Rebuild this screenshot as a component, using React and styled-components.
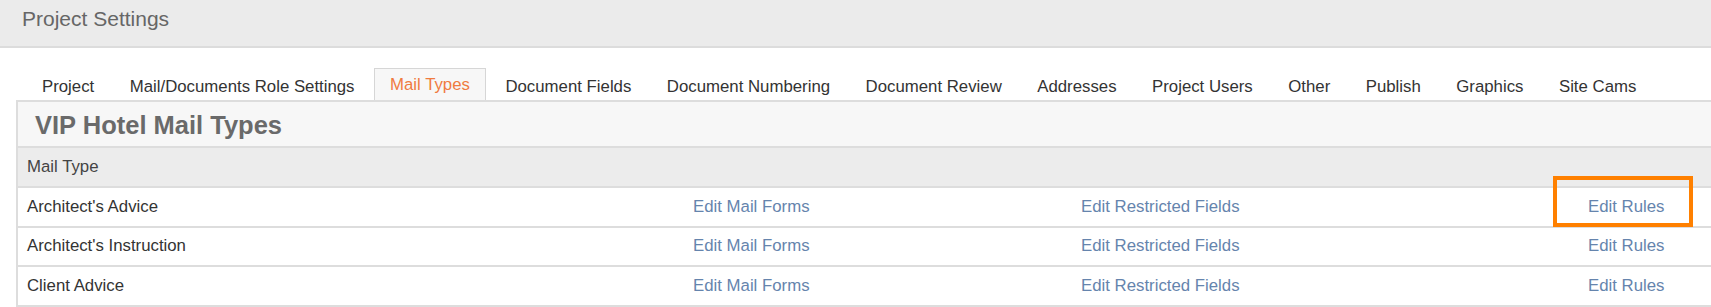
import styled, { createGlobalStyle } from "styled-components";

const GlobalStyle = createGlobalStyle`
  body {
    margin: 0;
    background: #fff;
    font-family: "Liberation Sans", Arial, sans-serif;
    color: #333;
  }
`;

const PageHeader = styled.div`
  height: 46px;
  background: #ebebeb;
  border-bottom: 2px solid #dcdcdc;
  padding-left: 22px;
`;

const PageTitle = styled.h1`
  margin: 0;
  font-size: 21px;
  font-weight: normal;
  line-height: 38px;
  color: #666;
`;

const Content = styled.div`
  margin-left: 16px;
  margin-top: 20px;
`;

const TabBar = styled.div`
  display: flex;
  padding-left: 10px;
  border-bottom: 2px solid #dddddd;
`;

const Tab = styled.div`
  line-height: 31px;
  padding: 0 15px;
  margin-right: 3.5px;
  font-size: 16.8px;
  white-space: nowrap;
  border: 1px solid ${(p) => (p.$active ? "#d6d6d6" : "transparent")};
  border-bottom: none;
  background: ${(p) => (p.$active ? "#f7f7f7" : "transparent")};
  color: ${(p) => (p.$active ? "#f07b3f" : "#333")};
  margin-bottom: ${(p) => (p.$active ? "-2px" : "0")};
  height: ${(p) => (p.$active ? "31px" : "29px")};
  margin-top: ${(p) => (p.$active ? "0" : "2px")};
`;

const Panel = styled.div`
  border-left: 2px solid #dddddd;
`;

const PanelTitle = styled.h2`
  margin: 0;
  padding: 4px 0 2px 17px;
  line-height: 38px;
  font-size: 25.5px;
  font-weight: bold;
  color: #6a6a6a;
  background: #f7f7f7;
  border-bottom: 2px solid #dddddd;
`;

const Row = styled.div`
  display: grid;
  grid-template-columns: 666px 388px 507px 1fr;
  height: ${(p) => (p.$head ? "38px" : "37.5px")};
  background: ${(p) => (p.$head ? "#ececec" : "#fff")};
  border-bottom: 2px solid #dddddd;
  font-size: 16.8px;
`;

const Cell = styled.div`
  display: flex;
  align-items: center;
  position: relative;
  padding-left: 9px;
  color: ${(p) => (p.$head ? "#444" : "#333")};
  white-space: nowrap;
`;

const Link = styled.a`
  color: #6584ad;
  text-decoration: none;
  cursor: pointer;
`;

const Highlight = styled.span`
  position: absolute;
  left: -26px;
  top: -12px;
  width: 140px;
  height: 51px;
  box-sizing: border-box;
  border: 4px solid #ff8000;
  pointer-events: none;
`;

const tabs = [
  "Project",
  "Mail/Documents Role Settings",
  "Mail Types",
  "Document Fields",
  "Document Numbering",
  "Document Review",
  "Addresses",
  "Project Users",
  "Other",
  "Publish",
  "Graphics",
  "Site Cams",
];

const mailTypes = ["Architect's Advice", "Architect's Instruction", "Client Advice"];

export default function App() {
  return (
    <>
      <GlobalStyle />
      <PageHeader>
        <PageTitle>Project Settings</PageTitle>
      </PageHeader>
      <Content>
        <TabBar>
          {tabs.map((t) => (
            <Tab key={t} $active={t === "Mail Types"}>
              {t}
            </Tab>
          ))}
        </TabBar>
        <Panel>
          <PanelTitle>VIP Hotel Mail Types</PanelTitle>
          <Row $head>
            <Cell $head>Mail Type</Cell>
            <Cell />
            <Cell />
            <Cell />
          </Row>
          {mailTypes.map((m, i) => (
            <Row key={m}>
              <Cell>{m}</Cell>
              <Cell>
                <Link>Edit Mail Forms</Link>
              </Cell>
              <Cell>
                <Link>Edit Restricted Fields</Link>
              </Cell>
              <Cell>
                <Link>Edit Rules</Link>
                {i === 0 && <Highlight />}
              </Cell>
            </Row>
          ))}
        </Panel>
      </Content>
    </>
  );
}
